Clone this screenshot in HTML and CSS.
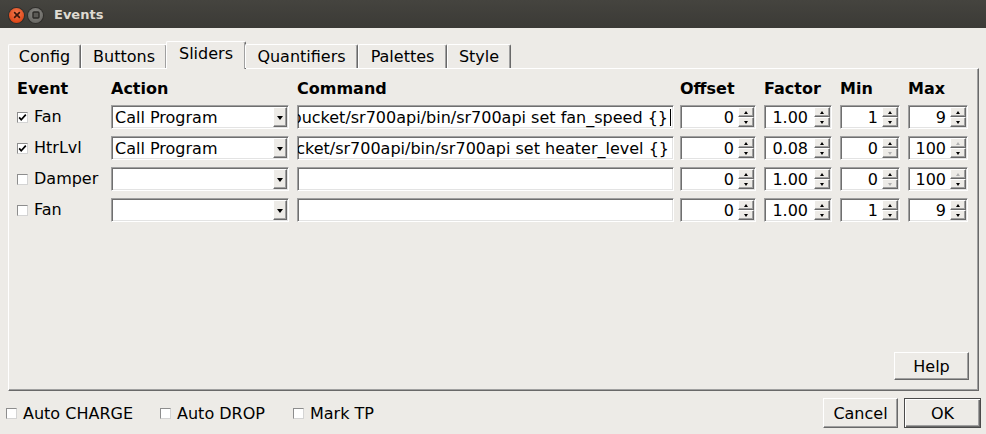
FILE: index.html
```html
<!DOCTYPE html>
<html>
<head>
<meta charset="utf-8">
<title>Events</title>
<link rel="stylesheet" href="styles.css">
</head>
<body>
<div class="window">
  <div class="titlebar">
    <span class="wbtn close"><svg width="14" height="14" viewBox="0 0 14 14"><path d="M4.6 4.6l4.8 4.8M9.4 4.6l-4.8 4.8" stroke="#3a160b" stroke-width="1.6" stroke-linecap="round"/></svg></span>
    <span class="wbtn max"><svg width="14" height="14" viewBox="0 0 14 14"><rect x="4" y="4" width="6" height="6" rx="1" fill="#5a5955" stroke="#2b2a27" stroke-width="1.4"/></svg></span>
    <span class="title">Events</span>
  </div>
  <div class="main">
    <div class="tabs">
      <div class="tab t-config">Config</div>
      <div class="tab t-buttons">Buttons</div>
      <div class="tab active t-sliders">Sliders</div>
      <div class="tab t-quant">Quantifiers</div>
      <div class="tab t-pal">Palettes</div>
      <div class="tab t-style">Style</div>
    </div>
    <div class="pane">
      <div class="grid">
        <div class="hd">Event</div>
        <div class="hd">Action</div>
        <div class="hd">Command</div>
        <div class="hd">Offset</div>
        <div class="hd">Factor</div>
        <div class="hd">Min</div>
        <div class="hd">Max</div>

        <label class="ev"><span class="cb on"><svg width="9" height="9" viewBox="0 0 9 9"><path d="M1.2 4.4l2 2.3L7.8 1.6" fill="none" stroke="#000" stroke-width="1.7"/></svg></span>Fan</label>
        <div class="combo"><span class="ctext">Call Program</span><span class="carrow"></span></div>
        <div class="field cmd"><span class="ctext">~/Dropbox/bucket/sr700api/bin/sr700api set fan_speed {}<span class="caret"></span></span></div>
        <div class="spin w-off"><span class="val">0</span><span class="sbs"><span class="sb up"></span><span class="sb dn"></span></span></div>
        <div class="spin w-fac"><span class="val">1.00</span><span class="sbs"><span class="sb up"></span><span class="sb dn"></span></span></div>
        <div class="spin w-min"><span class="val">1</span><span class="sbs"><span class="sb up"></span><span class="sb dn"></span></span></div>
        <div class="spin w-max"><span class="val">9</span><span class="sbs"><span class="sb up"></span><span class="sb dn"></span></span></div>

        <label class="ev"><span class="cb on"><svg width="9" height="9" viewBox="0 0 9 9"><path d="M1.2 4.4l2 2.3L7.8 1.6" fill="none" stroke="#000" stroke-width="1.7"/></svg></span>HtrLvl</label>
        <div class="combo"><span class="ctext">Call Program</span><span class="carrow"></span></div>
        <div class="field cmd"><span class="ctext">~/Dropbox/bucket/sr700api/bin/sr700api set heater_level {}</span></div>
        <div class="spin w-off"><span class="val">0</span><span class="sbs"><span class="sb up"></span><span class="sb dn"></span></span></div>
        <div class="spin w-fac"><span class="val">0.08</span><span class="sbs"><span class="sb up"></span><span class="sb dn"></span></span></div>
        <div class="spin w-min"><span class="val">0</span><span class="sbs"><span class="sb up"></span><span class="sb dn off"></span></span></div>
        <div class="spin w-max"><span class="val">100</span><span class="sbs"><span class="sb up off"></span><span class="sb dn"></span></span></div>

        <label class="ev"><span class="cb"></span>Damper</label>
        <div class="combo"><span class="ctext"></span><span class="carrow"></span></div>
        <div class="field cmd"><span class="ctext"></span></div>
        <div class="spin w-off"><span class="val">0</span><span class="sbs"><span class="sb up"></span><span class="sb dn"></span></span></div>
        <div class="spin w-fac"><span class="val">1.00</span><span class="sbs"><span class="sb up"></span><span class="sb dn"></span></span></div>
        <div class="spin w-min"><span class="val">0</span><span class="sbs"><span class="sb up"></span><span class="sb dn off"></span></span></div>
        <div class="spin w-max"><span class="val">100</span><span class="sbs"><span class="sb up off"></span><span class="sb dn"></span></span></div>

        <label class="ev"><span class="cb"></span>Fan</label>
        <div class="combo"><span class="ctext"></span><span class="carrow"></span></div>
        <div class="field cmd"><span class="ctext"></span></div>
        <div class="spin w-off"><span class="val">0</span><span class="sbs"><span class="sb up"></span><span class="sb dn"></span></span></div>
        <div class="spin w-fac"><span class="val">1.00</span><span class="sbs"><span class="sb up"></span><span class="sb dn"></span></span></div>
        <div class="spin w-min"><span class="val">1</span><span class="sbs"><span class="sb up"></span><span class="sb dn"></span></span></div>
        <div class="spin w-max"><span class="val">9</span><span class="sbs"><span class="sb up"></span><span class="sb dn"></span></span></div>
      </div>
      <div class="pane-foot">
        <button class="btn help">Help</button>
      </div>
    </div>
    <div class="bottom">
      <label class="opt"><span class="cb"></span>Auto CHARGE</label>
      <label class="opt"><span class="cb"></span>Auto DROP</label>
      <label class="opt"><span class="cb"></span>Mark TP</label>
      <div class="spacer"></div>
      <button class="btn cancel">Cancel</button>
      <button class="btn ok">OK</button>
    </div>
  </div>
</div>
</body>
</html>
```

FILE: styles.css
```css
* { box-sizing: border-box; }
html, body { margin: 0; padding: 0; }
body {
  width: 986px;
  height: 434px;
  overflow: hidden;
  background: #edebe7;
  font-family: "DejaVu Sans", "Liberation Sans", sans-serif;
  font-size: 16px;
  color: #000;
}
.window { width: 986px; height: 434px; display: flex; flex-direction: column; }

/* title bar */
.titlebar {
  height: 28px;
  flex: none;
  background: linear-gradient(#45443f, #3b3a36);
  display: flex;
  align-items: center;
  padding-left: 9px;
}
.wbtn {
  width: 15px; height: 15px;
  border-radius: 50%;
  display: flex; align-items: center; justify-content: center;
  margin-top: 2px;
}
.wbtn svg { display: block; }
.close {
  background: radial-gradient(circle at 50% 35%, #f27a50, #e0491a 70%, #b93a12);
  box-shadow: 0 0 0 1px #2f2e2b;
}
.max {
  margin-left: 4px;
  background: radial-gradient(circle at 50% 35%, #8a8985, #6c6b67 70%, #575652);
  box-shadow: 0 0 0 1px #2f2e2b;
}
.title {
  margin-left: 11px;
  color: #dfdbd2;
  font-weight: bold;
  font-size: 13px;
  margin-top: 1px;
}

.main { flex: 1; display: flex; flex-direction: column; padding: 13px 0 0 0; }

/* tabs */
.tabs {
  height: 28px;
  display: flex;
  align-items: flex-end;
  padding-left: 8px;
  position: relative;
  z-index: 1;
  margin-bottom: -1px;
}
.tab {
  height: 24px;
  margin-bottom: 1px;
  background: #edebe7;
  border-top: 1px solid #fff;
  border-left: 1px solid #fff;
  border-right: 1px solid #696969;
  box-shadow: inset -1px 0 0 #a0a0a0;
  border-radius: 2px 2px 0 0;
  text-align: center;
  line-height: 22px;
  padding-top: 1px;
}
.t-config { width: 73px; }
.t-buttons { width: 86px; }
.t-sliders { width: 80px; }
.t-quant { width: 113px; }
.t-pal { width: 89px; }
.t-style { width: 64px; }
.tab.active {
  height: 28px;
  margin-bottom: 0;
  margin-left: -1px;
  margin-right: -1px;
  line-height: 24px;
  padding-top: 0;
}

/* pane */
.pane {
  margin: 0 7px 0 8px;
  height: 323px;
  border: 1px solid;
  border-color: #fff #696969 #696969 #fff;
  box-shadow: inset -1px -1px 0 #a0a0a0;
  padding: 10px 10px 10px 8px;
  display: flex;
  flex-direction: column;
}
.grid {
  display: grid;
  grid-template-columns: 94px 186px 383px 84px 76px 68px 60px;
  grid-template-rows: 19px repeat(4, 24px);
  row-gap: 7px;
}
.hd { font-weight: bold; line-height: 19px; white-space: nowrap; }

.ev { display: flex; align-items: center; white-space: nowrap; line-height: 24px; }
.ev .cb { margin-right: 6px; }

.cb {
  width: 11px; height: 11px;
  flex: none;
  background: #fff;
  border: 1px solid;
  border-color: #8d8d8d #d4d4d4 #d4d4d4 #8d8d8d;
  display: inline-flex;
  align-items: center;
  justify-content: center;
}
.cb svg { display: block; }

/* sunken fields */
.combo, .field, .spin {
  height: 24px;
  background: #fff;
  border: 1px solid;
  border-color: #a0a0a0 #fff #fff #a0a0a0;
  box-shadow: inset 1px 1px 0 #6f6f6f, inset -1px -1px 0 #e3e3e3;
  display: flex;
  align-items: stretch;
  overflow: hidden;
}
.combo { width: 178px; padding: 1px 1px 1px 3px; }
.combo .ctext { flex: 1; line-height: 21px; white-space: nowrap; }
.carrow {
  width: 14px;
  flex: none;
  background: #edebe7;
  border: 1px solid;
  border-color: #fff #696969 #696969 #fff;
  box-shadow: inset -1px -1px 0 #a0a0a0;
  display: flex;
  align-items: center;
  justify-content: center;
}
.carrow::after {
  content: "";
  width: 0; height: 0;
  border-left: 3.5px solid transparent;
  border-right: 3.5px solid transparent;
  border-top: 4px solid #000;
  margin-top: 1px;
}

.cmd { width: 377px; justify-content: flex-end; padding: 1px 4px 1px 1px; }
.cmd .ctext { white-space: nowrap; line-height: 21px; flex: none; }
.caret {
  display: inline-block;
  width: 1px; height: 17px;
  background: #000;
  vertical-align: -3px;
  margin-left: 2px;
  margin-right: -2px;
}

.spin { padding: 1px 1px 1px 1px; }
.w-off { width: 76px; }
.w-fac { width: 68px; }
.w-min { width: 60px; }
.w-max { width: 60px; }
.spin .val { flex: 1; text-align: right; line-height: 21px; padding-right: 4px; white-space: nowrap; }
.w-fac .val { padding-right: 6px; }
.sbs { width: 16px; flex: none; display: flex; flex-direction: column; }
.sb {
  flex: 1;
  background: #edebe7;
  border: 1px solid;
  border-color: #fff #696969 #696969 #fff;
  box-shadow: inset -1px -1px 0 #a0a0a0;
  display: flex;
  align-items: center;
  justify-content: center;
}
.sb::after {
  content: "";
  width: 0; height: 0;
  border-left: 2.5px solid transparent;
  border-right: 2.5px solid transparent;
}
.sb.up::after { border-bottom: 3px solid #000; }
.sb.dn::after { border-top: 3px solid #000; }
.sb.up.off::after { border-bottom-color: #b0b0b0; }
.sb.dn.off::after { border-top-color: #b0b0b0; }

.pane-foot { margin-top: auto; display: flex; justify-content: flex-end; padding-right: 0; margin-right: -1px; }

/* buttons */
.btn {
  font-family: inherit;
  font-size: 16px;
  color: #000;
  background: #edebe7;
  border: 1px solid;
  border-color: #fff #696969 #696969 #fff;
  box-shadow: inset -1px -1px 0 #a0a0a0;
  padding: 0;
  margin: 0;
  text-align: center;
}
.help { width: 75px; height: 28px; }

.bottom {
  flex: 1;
  display: flex;
  align-items: center;
  padding: 7px 5px 6px 6px;
}
.opt { display: flex; align-items: center; white-space: nowrap; }
.opt .cb { margin-right: 6px; }
.opt + .opt { margin-left: 27px; }
.opt:nth-child(3) { margin-left: 28px; }
.spacer { flex: 1; }
.cancel { width: 75px; height: 30px; }
.ok {
  width: 77px; height: 30px;
  margin-left: 6px;
  border: 1px solid #4a4a4a;
  box-shadow: inset 1px 1px 0 #fff, inset -1px -1px 0 #696969, inset -2px -2px 0 #a0a0a0;
}
```
